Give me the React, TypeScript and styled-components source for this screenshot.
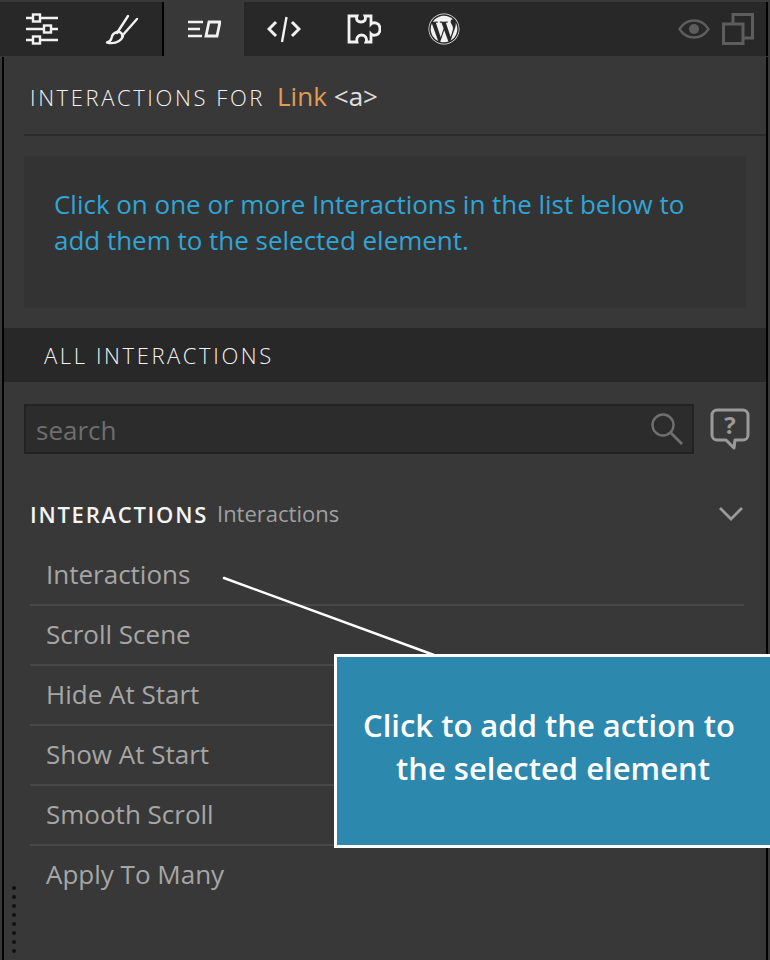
import React from "react";
import styled, { createGlobalStyle } from "styled-components";
import { FaWordpress } from "react-icons/fa";

const Global = createGlobalStyle`
  html, body { margin: 0; padding: 0; background: #383838; }
  * { box-sizing: border-box; }
`;
const Page = styled.div`
  position: relative; width: 770px; height: 960px; overflow: hidden;
  background: #383838; font-family: "Open Sans", "Noto Sans", sans-serif;
  padding-top: 2px;
`;
const Toolbar = styled.div`
  display: flex; height: 54px; background: #282828; margin-right: 2px; padding-left: 2px;
  border-right: 2px solid #000;
`;
const Tab = styled.div<{ $active?: boolean; $divider?: boolean }>`
  width: ${p => (p.$divider ? 82 : 80)}px; height: 54px; display: flex; align-items: center; justify-content: center;
  background: ${p => (p.$active ? "#383838" : "transparent")};
  color: #f2f2f2; flex: none;
  ${p => (p.$divider ? "border-right: 2px solid #000;" : "")}
`;
const ToolSpacer = styled.div`flex: 1;`;
const GhostIcons = styled.div`
  display: flex; align-items: center; gap: 12px; padding-right: 12px; color: #5d5d5d;
`;
const Panel = styled.div`
  height: 903px; margin: 1px 2px 0; 
  border-left: 2px solid #000; border-right: 2px solid #000; display: flex; flex-direction: column;
`;
const Title = styled.div`
  height: 79px; margin-left: 20px; border-bottom: 2px solid #2b2b2b; padding: 22px 0 0 6px;
  line-height: 34px; display: flex; align-items: baseline;
`;
const TitleCaps = styled.span`font-size: 22px; letter-spacing: 2.6px; font-weight: 300; color: #f4f4f4;`;
const TitleLink = styled.span`font-size: 26px; color: #e39a52; margin-left: 12px;`;
const TitleTag = styled.span`font-size: 26px; color: #e0e0e0; margin-left: 7px;`;
const Notice = styled.div`
  margin: 20px 20px 0 20px; height: 152px; background: #333333; padding: 30px 30px 0;
  font-size: 26px; line-height: 36px; letter-spacing: -0.02px; color: #30a5d6;
`;
const SectionBar = styled.div`
  margin-top: 20px; height: 54px; background: #282828; padding: 12px 0 0 40px;
  font-size: 22px; line-height: 30px; letter-spacing: 2.6px; font-weight: 300; color: #f4f4f4;
`;
const SearchRow = styled.div`
  display: flex; align-items: center; margin: 22px 0 0 20px; gap: 15px; height: 50px;
`;
const SearchBox = styled.div`
  width: 670px; height: 50px; background: #2c2c2c; border: 2px solid #222;
  display: flex; align-items: center; justify-content: space-between; padding: 0 8px 0 10px;
  font-size: 26px; color: #6e6e6e;
`;
const SearchLabel = styled.span`padding-top: 2px;`;
const GroupHead = styled.div`
  display: flex; align-items: center; margin: 39px 22px 0 26px; height: 42px;
`;
const GroupName = styled.span`
  font-size: 22px; font-weight: 600; letter-spacing: 1.75px; color: #f4f4f4;
`;
const GroupSub = styled.span`font-size: 22px; color: #a0a0a0; margin-left: 9px; padding-bottom: 2px; flex: 1;`;
const List = styled.div`margin: 11px 22px 0 26px; display: flex; flex-direction: column;`;
const Row = styled.div<{ $last?: boolean }>`
  height: 60px; padding: 0 0 2px 16px; display: flex; align-items: center;
  font-size: 26px; color: #a6a6a6;
  border-bottom: 2px solid ${p => (p.$last ? "transparent" : "#484848")};
`;
const Grip = styled.div`
  position: absolute; left: 12px; top: 886px; display: grid; gap: 5px;
`;
const Dot = styled.span`width: 4px; height: 4px; border-radius: 50%; background: #111;`;
const Callout = styled.div`
  position: absolute; left: 334px; top: 654px; width: 440px; height: 194px;
  background: #2d88ae; border: 3px solid #fff; padding: 47px 0 0 0;
  font-size: 31px; line-height: 43px; font-weight: 600; color: #fff;
`;
const CalloutLine = styled.div<{ $indent: number }>`
  padding-left: ${p => p.$indent}px; white-space: nowrap;
`;
const Leader = styled.svg`position: absolute; left: 0; top: 0; pointer-events: none;`;

export default function App() {
  return (
    <Page>
      <Global />
      <Toolbar>
        <Tab>
          <svg width="34" height="32" viewBox="0 0 34 32" fill="none" stroke="currentColor" strokeWidth="2.4">
            <path d="M1 5h32M1 16h32M1 27h32" />
            <rect x="8" y="1.500" width="7" height="7" fill="#282828" />
            <rect x="19" y="12.500" width="7" height="7" fill="#282828" />
            <rect x="8" y="23.500" width="7" height="7" fill="#282828" />
          </svg>
        </Tab>
        <Tab $divider>
          <svg width="34" height="34" viewBox="0 0 34 34" fill="none" stroke="currentColor" strokeWidth="2.400" strokeLinecap="round" strokeLinejoin="round">
            <path d="M23 4 12 21M32 7 17 24" />
            <path d="M12 20C8 21 7 23 6.500 26 6 28.500 4 30 2 30.500 6 31.500 11 31 14 29 17 27 19 24 17 22 16 20.500 14 19.500 12 20Z" />
          </svg>
        </Tab>
        <Tab $active>
          <svg width="34" height="18" viewBox="0 0 34 18" fill="none" stroke="currentColor" strokeWidth="2.600">
            <path d="M1 2h15M1 9h12M1 16h14" />
            <path d="M22 2h11l-3 14H19Z" strokeWidth="2.800" />
          </svg>
        </Tab>
        <Tab>
          <svg width="34" height="28" viewBox="0 0 34 28" fill="none" stroke="currentColor" strokeWidth="3">
            <path d="M9 7 2 14l7 7M25 7l7 7-7 7" />
            <path d="M19.500 2 15 27" strokeWidth="2.400" />
          </svg>
        </Tab>
        <Tab>
          <svg width="34" height="30" viewBox="0 0 34 30" fill="none" stroke="currentColor" strokeWidth="2.800">
            <path d="M2 2H10C8.500 6 11 8 14 8S19.500 6 18 2H24V10C26 8 33 8 33 15S26 22 24 20V28H19C20.500 24 18 21 14.500 21S9 24 10 28H2Z" />
          </svg>
        </Tab>
        <Tab>
          <FaWordpress size={32} />
        </Tab>
        <ToolSpacer />
        <GhostIcons>
          <svg width="32" height="20" viewBox="0 0 32 20" fill="none" stroke="currentColor" strokeWidth="2.400">
            <path d="M1.500 10C5 4.500 10 1.500 16 1.500S27 4.500 30.500 10C27 15.500 22 18.500 16 18.500S5 15.500 1.500 10Z" />
            <circle cx="16" cy="10" r="5" fill="currentColor" stroke="none" />
          </svg>
          <svg width="32" height="32" viewBox="0 0 32 32" fill="none" stroke="currentColor" strokeWidth="3">
            <path d="M11 11V1.500h19.500V25H21" />
            <rect x="1.500" y="11" width="19.500" height="19.500" />
          </svg>
        </GhostIcons>
      </Toolbar>
      <Panel>
        <Title>
          <TitleCaps>INTERACTIONS FOR</TitleCaps>
          <TitleLink>Link</TitleLink>
          <TitleTag>&lt;a&gt;</TitleTag>
        </Title>
        <Notice>Click on one or more Interactions in the list below to add them to the selected element.</Notice>
        <SectionBar>ALL INTERACTIONS</SectionBar>
        <SearchRow>
          <SearchBox>
            <SearchLabel>search</SearchLabel>
            <svg width="34" height="34" viewBox="0 0 34 34" fill="none" stroke="#6f6f6f" strokeWidth="2.400">
              <circle cx="13" cy="13" r="10.500" />
              <path d="m20.500 20.500 11.500 11.500" strokeWidth="2.800" />
            </svg>
          </SearchBox>
          <svg width="42" height="42" viewBox="0 0 42 42" fill="none">
            <path d="M8 2h26a5 5 0 0 1 5 5v20a5 5 0 0 1-5 5h-8l-1 8-8-8H8a5 5 0 0 1-5-5V7a5 5 0 0 1 5-5Z" stroke="#9a9a9a" strokeWidth="3" strokeLinejoin="round" />
            <text x="21" y="26" textAnchor="middle" fontFamily="Open Sans" fontWeight="700" fontSize="24" fill="#9a9a9a">?</text>
          </svg>
        </SearchRow>
        <GroupHead>
          <GroupName>INTERACTIONS</GroupName>
          <GroupSub>Interactions</GroupSub>
          <svg width="26" height="16" viewBox="0 0 26 16" fill="none" stroke="#9a9a9a" strokeWidth="2.800">
            <path d="m2 2 11 11L24 2" />
          </svg>
        </GroupHead>
        <List>
          <Row>Interactions</Row>
          <Row>Scroll Scene</Row>
          <Row>Hide At Start</Row>
          <Row>Show At Start</Row>
          <Row>Smooth Scroll</Row>
          <Row $last>Apply To Many</Row>
        </List>
      </Panel>
      <Grip>{Array.from({ length: 8 }).map((_, i) => <Dot key={i} />)}</Grip>
      <Leader width="770" height="960" viewBox="0 0 770 960">
        <path d="M224 578 434 655" stroke="#fff" strokeWidth="2.500" strokeLinecap="round" />
      </Leader>
      <Callout>
        <CalloutLine $indent={26}>Click to add the action to</CalloutLine>
        <CalloutLine $indent={59}>the selected element</CalloutLine>
      </Callout>
    </Page>
  );
}
